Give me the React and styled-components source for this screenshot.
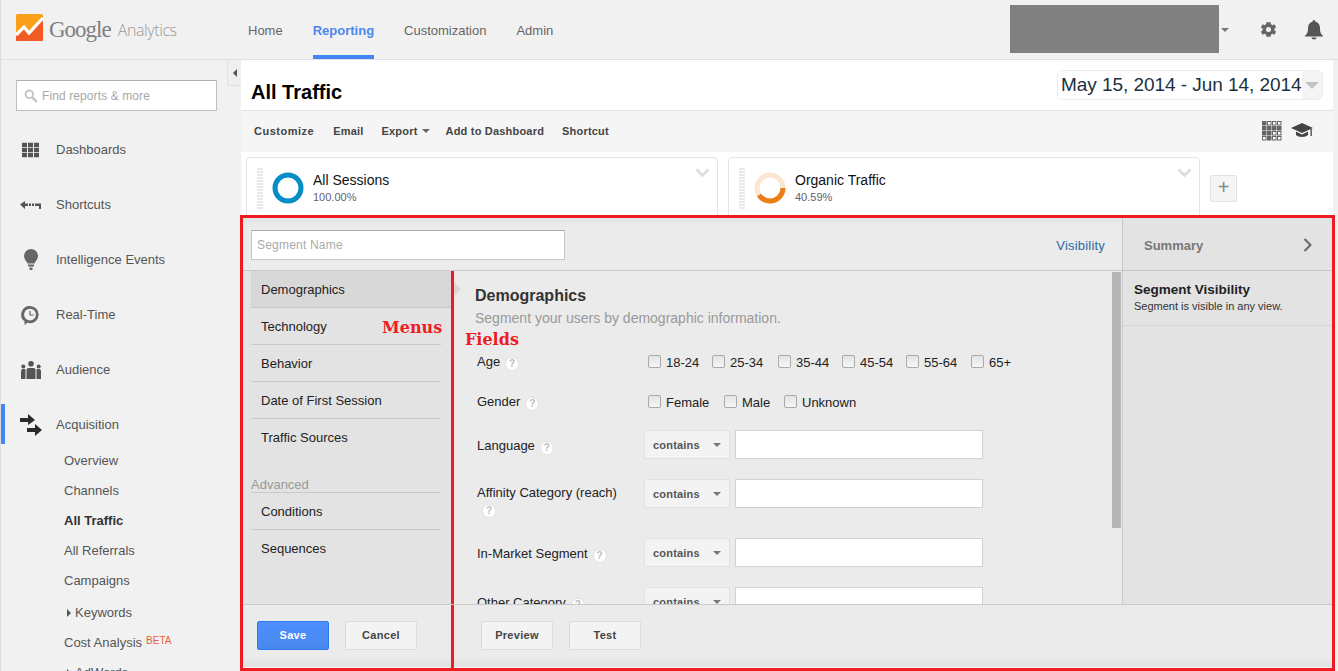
import React from "react";
import styled, { createGlobalStyle } from "styled-components";

const GlobalStyle = createGlobalStyle`
  html, body {
    margin: 0;
    height: 671px;
    overflow: hidden;
    background: #f1f1f1;
    font-family: "Liberation Sans", Arial, sans-serif;
  }
  * { box-sizing: border-box; }
`;

const Page = styled.div`
  width: 1338px;
  height: 671px;
  overflow: hidden;
  border-left: 1px solid #dcdcdc;
  display: flex;
  flex-direction: column;
`;

/* header */
const Header = styled.header`
  height: 60px;
  flex: none;
  display: flex;
  align-items: center;
  border-bottom: 1px solid #e0e0e0;
  background: #f1f1f1;
  padding-left: 14px;
`;

const Brand = styled.div`
  width: 233px;
  display: flex;
  align-items: center;
`;

const LogoWrap = styled.span`
  display: flex;
  margin-top: -4px;
`;

const BrandGoogle = styled.span`
  font-family: "Liberation Serif", serif;
  font-size: 23px;
  color: #808080;
  margin-left: 6px;
  letter-spacing: -1px;
`;

const BrandAnalytics = styled.span`
  font-family: "Open Sans", sans-serif;
  font-weight: 300;
  font-size: 16px;
  letter-spacing: -0.4px;
  color: #999;
  margin-left: 7px;
  margin-top: 1px;
`;

const TopNav = styled.nav`
  display: flex;
  gap: 30px;
  height: 59px;
`;

const TopLink = styled.a`
  height: 59px;
  line-height: 61px;
  font-size: 13px;
  color: ${(p) => (p.$active ? "#4d86f0" : "#666")};
  font-weight: ${(p) => (p.$active ? 700 : 400)};
  border-bottom: ${(p) => (p.$active ? "4px solid #4285f4" : "none")};
`;

const HeaderRight = styled.div`
  margin-left: auto;
  display: flex;
  align-items: center;
  padding-right: 15px;
`;

const Redacted = styled.div`
  width: 209px;
  height: 48px;
  background: #808080;
  margin-top: -2px;
`;

const Caret = styled.span`
  display: inline-block;
  width: 0;
  height: 0;
  border-left: ${(p) => p.$size || 4}px solid transparent;
  border-right: ${(p) => p.$size || 4}px solid transparent;
  border-top: ${(p) => p.$size || 4}px solid ${(p) => p.$color || "#777"};
`;

const AccountCaret = styled(Caret)`
  margin: 0 30px 0 2px;
`;

const BellWrap = styled.div`
  margin-left: 27px;
  display: flex;
`;

/* body */
const Body = styled.div`
  flex: 1;
  display: flex;
  min-height: 0;
`;

const Sidebar = styled.aside`
  width: 240px;
  flex: none;
  background: #f1f1f1;
  position: relative;
  padding-top: 20px;
`;

const CollapseTab = styled.div`
  position: absolute;
  top: 0;
  right: 0;
  width: 14px;
  height: 26px;
  background: #efefef;
  border: 1px solid #e0e0e0;
  border-top: none;
  border-right: none;
  display: flex;
  align-items: center;
  justify-content: center;
`;

const LeftCaret = styled.span`
  width: 0;
  height: 0;
  border-top: 4px solid transparent;
  border-bottom: 4px solid transparent;
  border-right: 4px solid #555;
`;

const SearchBox = styled.div`
  width: 201px;
  height: 31px;
  margin-left: 15px;
  background: #fff;
  border: 1px solid #c0c0c0;
  border-top-color: #b0b0b0;
  display: flex;
  align-items: center;
  padding-left: 7px;
  gap: 4px;
  font-size: 12px;
  color: #a8a8a8;
  letter-spacing: 0.1px;
`;

const SideList = styled.div`
  margin-top: 11px;
`;

const SideItem = styled.div`
  height: 55px;
  display: flex;
  align-items: center;
  font-size: 13px;
  color: #555;
  position: relative;
  padding-left: 55px;
`;

const SideIcon = styled.span`
  position: absolute;
  left: 19px;
  top: 50%;
  transform: translateY(-50%);
  display: flex;
`;

const ActiveBar = styled.span`
  position: absolute;
  left: 0;
  top: 7px;
  width: 4px;
  height: 40px;
  background: #4285f4;
`;

const SubItem = styled.div`
  height: 30px;
  margin-top: ${(p) => p.$mt || 0}px;
  line-height: 30px;
  padding-left: ${(p) => (p.$nested ? 74 : 63)}px;
  font-size: 13px;
  color: ${(p) => (p.$active ? "#333" : "#555")};
  font-weight: ${(p) => (p.$active ? 700 : 400)};
  position: relative;
`;

const SubArrow = styled.span`
  position: absolute;
  left: 66px;
  top: 11px;
  width: 0;
  height: 0;
  border-top: 4px solid transparent;
  border-bottom: 4px solid transparent;
  border-left: 4px solid #555;
`;

const Beta = styled.span`
  color: #e8613a;
  font-size: 10px;
  margin-left: 4px;
  line-height: 0;
  vertical-align: 3px;
`;

/* content */
const Content = styled.main`
  width: 1092px;
  flex: none;
  background: #fff;
  display: flex;
  flex-direction: column;
`;

const TitleRow = styled.div`
  height: 50px;
  flex: none;
  padding: 10px 10px 0;
  display: flex;
  justify-content: space-between;
  align-items: flex-start;
`;

const PageTitle = styled.h1`
  margin: 10px 0 0;
  font-size: 20px;
  line-height: 24px;
  font-weight: 700;
  color: #000;
`;

const DateRange = styled.div`
  width: 266px;
  height: 30px;
  border: 1px solid #ececec;
  border-radius: 5px;
  display: flex;
  align-items: center;
  font-size: 19px;
  letter-spacing: -0.05px;
  color: #20303f;
  padding-left: 3px;
  overflow: hidden;
  white-space: nowrap;
`;

const DateCaret = styled.span`
  margin-left: auto;
  width: 20px;
  height: 100%;
  background: #f4f4f4;
  display: flex;
  align-items: center;
  justify-content: center;
`;

const Toolbar = styled.div`
  height: 42px;
  flex: none;
  background: #f5f5f5;
  border-top: 1px solid #e5e5e5;
  display: flex;
  align-items: center;
  padding: 0 20px 1px 13px;
  gap: 18px;
`;

const ToolLink = styled.span`
  font-size: 11px;
  font-weight: 700;
  color: #444;
  letter-spacing: 0.2px;
  display: flex;
  align-items: center;
  gap: 4px;

  &:first-child {
    letter-spacing: 0.5px;
    margin-right: 1px;
  }

  &:nth-child(3) {
    margin-right: -2px;
  }
`;

const ToolIcons = styled.div`
  margin-left: auto;
  display: flex;
  align-items: center;
  gap: 9px;
`;

const CardRow = styled.div`
  height: 63px;
  flex: none;
  display: flex;
  padding: 5px 0 0 5px;
  gap: 10px;
  overflow: hidden;
`;

const SegmentCard = styled.div`
  width: 472px;
  height: 80px;
  border: 1px solid #e4e4e4;
  border-radius: 4px;
  display: flex;
  padding: 10px 7px 0 10px;
  position: relative;
`;

const DragHandle = styled.div`
  width: 6px;
  height: 42px;
  background: repeating-linear-gradient(#e8e8e8 0 2px, #fff 2px 3px);
`;

const CardText = styled.div`
  position: absolute;
  left: 66px;
  top: 14px;
`;

const CardName = styled.div`
  font-size: 14px;
  line-height: 17px;
  color: #111;
`;

const CardPct = styled.div`
  font-size: 11px;
  line-height: 13px;
  margin-top: 2px;
  color: #66606e;
`;

const DonutWrap = styled.span`
  position: absolute;
  left: 25px;
  top: 14px;
  display: flex;
`;

const CardChevron = styled.span`
  position: absolute;
  right: 7px;
  top: 10px;
  display: flex;
`;

const AddButton = styled.div`
  width: 27px;
  height: 27px;
  margin-top: 18px;
  background: #f5f5f5;
  border: 1px solid #e2e2e2;
  border-radius: 2px;
  color: #7b8a8f;
  font-size: 20px;
  line-height: 23px;
  text-align: center;
`;

/* segment panel */
const Panel = styled.section`
  flex: 1;
  min-height: 0;
  width: 1095px;
  margin-left: -1px;
  border: 3px solid #ed1c24;
  background: #ebebeb;
  display: flex;
  flex-direction: column;
  position: relative;
  overflow: hidden;
`;

const Upper = styled.div`
  flex: 1;
  min-height: 0;
  display: flex;
`;

const Editor = styled.div`
  width: 879px;
  flex: none;
  display: flex;
  flex-direction: column;
  background: linear-gradient(#e4e4e4, #ebebeb 8px);
`;

const TopBar = styled.div`
  height: 53px;
  flex: none;
  border-bottom: 1px solid #c9c9c9;
  display: flex;
  align-items: center;
  justify-content: space-between;
  padding: 2px 17px 0 8px;
`;

const NameInput = styled.div`
  width: 314px;
  height: 30px;
  background: #fff;
  border: 1px solid #c6c6c6;
  border-top-color: #a8a8a8;
  font-size: 12px;
  line-height: 28px;
  color: #aaa;
  padding-left: 5px;
  letter-spacing: 0.2px;
`;

const VisLink = styled.a`
  font-size: 13px;
  letter-spacing: 0.2px;
  color: #2a6aa6;
`;

const EditorMain = styled.div`
  flex: 1;
  display: flex;
  min-height: 0;
`;

const MenuCol = styled.div`
  width: 211px;
  flex: none;
  border-right: 3px solid #ed1c24;
  background: #e3e3e3;
  padding-left: 8px;
  position: relative;
`;

const MenuItem = styled.div`
  height: 37px;
  padding-left: 10px;
  margin-right: ${(p) => (p.$active ? 0 : 10)}px;
  font-size: 13px;
  line-height: 37px;
  color: #222;
  background: ${(p) => (p.$active ? "#d8d8d8" : "transparent")};
  border-bottom: ${(p) => (p.$last ? "none" : "1px solid #c9c9c9")};
`;

const AdvancedLabel = styled.div`
  margin: 10px 10px 0 0;
  padding-top: 9px;
  height: 27px;
  line-height: 19px;
  font-size: 13px;
  color: #999;
  border-bottom: 1px solid #c9c9c9;
`;

const FootBar = styled.div`
  height: 64px;
  flex: none;
  display: flex;
  background: linear-gradient(#ebebeb 82%, #e1e1e1 99%, #f4f4f4 99%);
  border-top: 1px solid #c9c9c9;
`;

const FootCell = styled.div`
  display: flex;
  gap: 16px;
  padding: 16px 0 0 ${(p) => p.$pad}px;
  width: ${(p) => p.$w || "auto"};
  border-right: ${(p) => (p.$divider ? "3px solid #ed1c24" : "none")};
`;

const Btn = styled.div`
  width: 72px;
  height: 29px;
  border: 1px solid ${(p) => (p.$primary ? "#3079ed" : "#dcdcdc")};
  border-radius: 2px;
  background: ${(p) => (p.$primary ? "linear-gradient(#4d90fe, #4787ed)" : "#f3f3f3")};
  color: ${(p) => (p.$primary ? "#fff" : "#444")};
  font-size: 11px;
  font-weight: 700;
  letter-spacing: 0.3px;
  line-height: 27px;
  text-align: center;
`;

const MenuTag = styled.span`
  position: absolute;
  left: 139px;
  top: 47px;
  font-family: "DejaVu Serif", serif;
  font-weight: 700;
  font-size: 16px;
  color: #ed1c24;
`;

const FieldsTag = styled.span`
  position: absolute;
  left: 11px;
  top: 59px;
  font-family: "DejaVu Serif", serif;
  font-weight: 700;
  font-size: 16px;
  color: #ed1c24;
`;

const ActivePointer = styled.span`
  position: absolute;
  left: 0;
  top: 11px;
  width: 0;
  height: 0;
  border-top: 7px solid transparent;
  border-bottom: 7px solid transparent;
  border-left: 7px solid #d8d8d8;
`;

const FieldsScroll = styled.div`
  flex: 1;
  min-width: 0;
  overflow: hidden;
  padding: 15px 0 0 21px;
  position: relative;
`;

const ScrollThumb = styled.div`
  position: absolute;
  top: 1px;
  right: 1px;
  width: 9px;
  height: 256px;
  background: #b5b5b5;
`;

const FieldsTitle = styled.h2`
  margin: 0;
  font-size: 16px;
  line-height: 20px;
  font-weight: 700;
  color: #333;
`;

const FieldsSub = styled.p`
  margin: 4px 0 0;
  font-size: 14px;
  line-height: 17px;
  color: #999;
`;

const FieldRow = styled.div`
  display: flex;
  margin-top: ${(p) => p.$mt}px;
  margin-left: 2px;
  height: ${(p) => p.$h}px;
`;

const FieldLabel = styled.div`
  width: 167px;
  flex: none;
  padding-top: ${(p) => p.$pt || 0}px;
  font-size: 13px;
  line-height: 18px;
  color: #222;
`;

const Help = styled.span`
  display: inline-flex;
  align-items: center;
  justify-content: center;
  width: 14px;
  height: 14px;
  margin-left: 5px;
  border-radius: 50%;
  background: #fff;
  border: 1px solid #e2e2e2;
  color: #bbb;
  font-size: 10px;
  font-weight: 700;
  vertical-align: -1px;
  position: relative;
  top: ${(p) => p.$lift || 0}px;
`;

const Checks = styled.div`
  display: flex;
  padding: 1px 0 0 4px;
`;

const CheckItem = styled.label`
  display: flex;
  width: ${(p) => p.$w}px;
  font-size: 13px;
  line-height: 18px;
  color: #222;
`;

const CheckBox = styled.span`
  width: 13px;
  height: 13px;
  flex: none;
  margin: 1px 5px 0 0;
  border: 1px solid #a9a9a9;
  border-radius: 2px;
  background: linear-gradient(#e4e4e4, #f6f6f6);
`;

const SelectBox = styled.div`
  width: 86px;
  height: 29px;
  background: #f3f3f3;
  border: 1px solid #e2e2e2;
  border-radius: 2px;
  display: flex;
  align-items: center;
  justify-content: space-between;
  padding: 0 8px;
  font-size: 11px;
  font-weight: 700;
  letter-spacing: 0.2px;
  color: #555;
`;

const TextBox = styled.div`
  width: 248px;
  height: 29px;
  margin-left: 5px;
  background: #fff;
  border: 1px solid #d2d2d2;
`;

/* summary */
const Summary = styled.aside`
  flex: 1;
  min-width: 0;
  background: #e3e3e3;
  border-left: 1px solid #c9c9c9;
  display: flex;
  flex-direction: column;
`;

const SummaryHead = styled.div`
  height: 53px;
  flex: none;
  border-bottom: 1px solid #c9c9c9;
  display: flex;
  align-items: center;
  justify-content: space-between;
  padding: 2px 19px 0 21px;
  font-size: 13px;
  font-weight: 700;
  color: #777;
`;

const SummaryBlock = styled.div`
  height: 55px;
  border-bottom: 1px solid #d5d5d5;
  padding: 10px 11px 0;
`;

const BlockTitle = styled.div`
  font-size: 13.5px;
  line-height: 17px;
  font-weight: 700;
  color: #222;
`;

const BlockText = styled.div`
  font-size: 11px;
  line-height: 13px;
  margin-top: 2px;
  color: #333;
`;

const Logo = () => (
  <svg width="28" height="27" viewBox="0 0 28 27">
    <rect x="1" y="0" width="27" height="27" rx="1.5" fill="#f9a11b" />
    <path d="M1 21 9 13l5 6L28 4v22a1 1 0 0 1-1 1H2a1 1 0 0 1-1-1z" fill="#f15a24" />
    <path d="M1 21 9 13l5 6L28 4" fill="none" stroke="#fff" strokeWidth="3.2" />
  </svg>
);

const Gear = () => (
  <svg width="19" height="19" viewBox="0 0 24 24" fill="#666">
    <path d="M19.4 13a7.6 7.6 0 0 0 0-2l2.2-1.7-2.2-3.8-2.6 1a7.6 7.6 0 0 0-1.8-1L14.6 2.7h-5.2L9 5.5a7.6 7.6 0 0 0-1.8 1l-2.6-1-2.2 3.8L4.6 11a7.6 7.6 0 0 0 0 2l-2.2 1.7 2.2 3.8 2.6-1a7.6 7.6 0 0 0 1.8 1l.4 2.8h5.2l.4-2.8a7.6 7.6 0 0 0 1.8-1l2.6 1 2.2-3.8zM12 15.2a3.2 3.2 0 1 1 0-6.4 3.2 3.2 0 0 1 0 6.4z" />
  </svg>
);

const Bell = () => (
  <svg width="18" height="20" viewBox="0 0 18 20" fill="#555">
    <path d="M9 0a1.6 1.6 0 0 1 1.5 1.7C13.4 2.4 15 4.8 15 8c0 4 .6 5.6 3 7.8v.7H0v-.7C2.4 13.6 3 12 3 8c0-3.2 1.6-5.6 4.5-6.3A1.6 1.6 0 0 1 9 0z" />
    <path d="M6.5 17.5h5a2.5 2 0 0 1-5 0z" />
  </svg>
);

const Search = () => (
  <svg width="14" height="14" viewBox="0 0 14 14" fill="none">
    <circle cx="5.3" cy="5.3" r="3.8" stroke="#c4c4c4" strokeWidth="1.8" />
    <path d="m8.3 8.3 4.5 4.5" stroke="#c4c4c4" strokeWidth="2.4" />
  </svg>
);

const DashIcon = () => (
  <svg width="24" height="15" viewBox="0 0 24 15" fill="#555">
    {[2, 8, 14].flatMap((x) =>
      [0, 5.25, 10.5].map((y) => <rect key={`${x}-${y}`} x={x} y={y} width="5" height="4.5" />)
    )}
  </svg>
);

const ShortcutIcon = () => (
  <svg width="22" height="10" viewBox="0 0 22 10" fill="#555">
    <path d="M0 4.5 5 1v2.5h3V6H5v3z" />
    <rect x="9" y="3.5" width="2" height="2.5" />
    <rect x="12" y="3.5" width="2" height="2.5" />
    <path d="M15 3.500h6V9h-2V6h-4z" />
  </svg>
);

const BulbIcon = () => (
  <svg width="22" height="22" viewBox="0 0 22 22" fill="#666">
    <path d="M11 0a7 7 0 0 1 7 7c0 3-2 4.5-3.5 7.5h-7C6 11.5 4 10 4 7a7 7 0 0 1 7-7z" />
    <rect x="8" y="15.5" width="6" height="2" />
    <rect x="9.5" y="18.5" width="3" height="2.5" />
  </svg>
);

const ClockIcon = () => (
  <svg width="20" height="20" viewBox="0 0 22 22">
    <path d="M11 1a9.500 9.500 0 0 1 0 19c-1 0-2-.2-3-.5L5 22v-4A9.500 9.500 0 0 1 11 1z" fill="#666" />
    <circle cx="11" cy="10.5" r="6.5" fill="#f1f1f1" />
    <path d="M11 6.500v4.500h4" fill="none" stroke="#666" strokeWidth="1.3" />
  </svg>
);

const AudienceIcon = () => (
  <svg width="22" height="18" viewBox="0 0 22 18" fill="#555">
    <circle cx="11" cy="2.8" r="2.8" />
    <circle cx="3.3" cy="5.5" r="2" />
    <circle cx="18.7" cy="5.5" r="2" />
    <path d="M6.5 9a2 2 0 0 1 2-2h5a2 2 0 0 1 2 2v9h-9zM1 10a2 2 0 0 1 2-2h2.500v10H1zM16.500 8H19a2 2 0 0 1 2 2v8h-4.500z" />
  </svg>
);

const AcquisitionIcon = () => (
  <svg width="23" height="22" viewBox="0 0 23 22" fill="#2b2b2b">
    <path d="M0 4h8V0l7 6-7 5V8H0z" />
    <path d="M7 14h8v-4l7 6-7 6v-4H7z" />
  </svg>
);

const Donut = ({ color, track, pct }) => {
  const r = 13;
  const c = 2 * Math.PI * r;
  return (
    <svg width="32" height="32" viewBox="0 0 32 32">
      <circle cx="16" cy="16" r={r} fill="none" stroke={track} strokeWidth="5" />
      <circle
        cx="16"
        cy="16"
        r={r}
        fill="none"
        stroke={color}
        strokeWidth="5"
        strokeDasharray={`${(c * pct) / 100} ${c}`}
      />
    </svg>
  );
};

const Chevron = () => (
  <svg width="15" height="10" viewBox="0 0 15 10" fill="none">
    <path d="m1.5 1.5 6 6 6-6" stroke="#dcdcdc" strokeWidth="2.6" />
  </svg>
);

const gridRows = ["1000", "1111", "1100", "0100"];

const GridIcon = () => (
  <svg width="20" height="20" viewBox="0 0 20 20">
    {gridRows.flatMap((row, r) =>
      [...row].map((on, c) => (
        <rect
          key={`${r}-${c}`}
          x={c * 5 + 0.5}
          y={r * 5 + 0.5}
          width="3.5"
          height="3.5"
          fill={on === "1" ? "#666" : "#fff"}
          stroke="#666"
        />
      ))
    )}
  </svg>
);

const CapIcon = () => (
  <svg width="22" height="16" viewBox="0 0 22 16" fill="#444">
    <path d="M11 0 22 5l-11 5L0 5z" />
    <path d="M5 8.5 11 11.5l6-3V12c-2 2.5-10 2.5-12 0z" />
    <rect x="19.5" y="6" width="1.3" height="7" />
  </svg>
);

const SummaryArrow = () => (
  <svg width="10" height="14" viewBox="0 0 10 14" fill="none">
    <path d="m1.5 1 6 6-6 6" stroke="#666" strokeWidth="2" />
  </svg>
);

const sideItems = [
  ["Dashboards", <DashIcon />],
  ["Shortcuts", <ShortcutIcon />],
  ["Intelligence Events", <BulbIcon />],
  ["Real-Time", <ClockIcon />],
  ["Audience", <AudienceIcon />],
];

const ages = [
  ["18-24", 64],
  ["25-34", 66],
  ["35-44", 64],
  ["45-54", 64],
  ["55-64", 65],
  ["65+", 50],
];

const genders = [
  ["Female", 76],
  ["Male", 60],
  ["Unknown", 90],
];

const menus = ["Demographics", "Technology", "Behavior", "Date of First Session", "Traffic Sources"];

const Combo = () => (
  <>
    <SelectBox>
      contains <Caret $color="#777" />
    </SelectBox>
    <TextBox />
  </>
);

export default function App() {
  return (
    <Page>
      <GlobalStyle />
      <Header>
        <Brand>
          <LogoWrap>
            <Logo />
          </LogoWrap>
          <BrandGoogle>Google</BrandGoogle>
          <BrandAnalytics>Analytics</BrandAnalytics>
        </Brand>
        <TopNav>
          <TopLink>Home</TopLink>
          <TopLink $active>Reporting</TopLink>
          <TopLink>Customization</TopLink>
          <TopLink>Admin</TopLink>
        </TopNav>
        <HeaderRight>
          <Redacted />
          <AccountCaret />
          <Gear />
          <BellWrap>
            <Bell />
          </BellWrap>
        </HeaderRight>
      </Header>
      <Body>
        <Sidebar>
          <CollapseTab>
            <LeftCaret />
          </CollapseTab>
          <SearchBox>
            <Search />
            Find reports &amp; more
          </SearchBox>
          <SideList>
            {sideItems.map(([label, icon]) => (
              <SideItem key={label}>
                <SideIcon>{icon}</SideIcon>
                {label}
              </SideItem>
            ))}
            <SideItem>
              <ActiveBar />
              <SideIcon>
                <AcquisitionIcon />
              </SideIcon>
              Acquisition
            </SideItem>
          </SideList>
          <SubItem $mt={-6}>Overview</SubItem>
          <SubItem>Channels</SubItem>
          <SubItem $active>All Traffic</SubItem>
          <SubItem>All Referrals</SubItem>
          <SubItem>Campaigns</SubItem>
          <SubItem $nested $mt={2}>
            <SubArrow />
            Keywords
          </SubItem>
          <SubItem>
            Cost Analysis<Beta>BETA</Beta>
          </SubItem>
          <SubItem $nested>
            <SubArrow />
            AdWords
          </SubItem>
        </Sidebar>
        <Content>
          <TitleRow>
            <PageTitle>All Traffic</PageTitle>
            <DateRange>
              May 15, 2014 - Jun 14, 2014
              <DateCaret>
                <Caret $size={7} $color="#c4c4c4" />
              </DateCaret>
            </DateRange>
          </TitleRow>
          <Toolbar>
            <ToolLink>Customize</ToolLink>
            <ToolLink>Email</ToolLink>
            <ToolLink>
              Export <Caret $color="#666" />
            </ToolLink>
            <ToolLink>Add to Dashboard</ToolLink>
            <ToolLink>Shortcut</ToolLink>
            <ToolIcons>
              <GridIcon />
              <CapIcon />
            </ToolIcons>
          </Toolbar>
          <CardRow>
            <SegmentCard>
              <DragHandle />
              <DonutWrap>
                <Donut color="#058dc7" track="#fff" pct={99.3} />
              </DonutWrap>
              <CardText>
                <CardName>All Sessions</CardName>
                <CardPct>100.00%</CardPct>
              </CardText>
              <CardChevron>
                <Chevron />
              </CardChevron>
            </SegmentCard>
            <SegmentCard>
              <DragHandle />
              <DonutWrap>
                <Donut color="#ed7e17" track="#fbe6d2" pct={40.59} />
              </DonutWrap>
              <CardText>
                <CardName>Organic Traffic</CardName>
                <CardPct>40.59%</CardPct>
              </CardText>
              <CardChevron>
                <Chevron />
              </CardChevron>
            </SegmentCard>
            <AddButton>+</AddButton>
          </CardRow>
          <Panel>
            <Upper>
              <Editor>
                <TopBar>
                  <NameInput>Segment Name</NameInput>
                  <VisLink>Visibility</VisLink>
                </TopBar>
                <EditorMain>
                  <MenuCol>
                    {menus.map((m, i) => (
                      <MenuItem key={m} $active={i === 0} $last={i === menus.length - 1}>
                        {m}
                      </MenuItem>
                    ))}
                    <AdvancedLabel>Advanced</AdvancedLabel>
                    <MenuItem>Conditions</MenuItem>
                    <MenuItem $last>Sequences</MenuItem>
                    <MenuTag>Menus</MenuTag>
                  </MenuCol>
                  <FieldsScroll>
                    <ActivePointer />
                    <FieldsTag>Fields</FieldsTag>
                    <ScrollThumb />
                    <FieldsTitle>Demographics</FieldsTitle>
                    <FieldsSub>Segment your users by demographic information.</FieldsSub>
                    <FieldRow $mt={26} $h={20}>
                      <FieldLabel>
                        Age<Help>?</Help>
                      </FieldLabel>
                      <Checks>
                        {ages.map(([a, w]) => (
                          <CheckItem key={a} $w={w}>
                            <CheckBox />
                            {a}
                          </CheckItem>
                        ))}
                      </Checks>
                    </FieldRow>
                    <FieldRow $mt={20} $h={20}>
                      <FieldLabel>
                        Gender<Help>?</Help>
                      </FieldLabel>
                      <Checks>
                        {genders.map(([a, w]) => (
                          <CheckItem key={a} $w={w}>
                            <CheckBox />
                            {a}
                          </CheckItem>
                        ))}
                      </Checks>
                    </FieldRow>
                    <FieldRow $mt={17} $h={29}>
                      <FieldLabel $pt={7}>
                        Language<Help>?</Help>
                      </FieldLabel>
                      <Combo />
                    </FieldRow>
                    <FieldRow $mt={20} $h={39}>
                      <FieldLabel $pt={5}>
                        Affinity Category (reach)
                        <br />
                        <Help $lift={-2}>?</Help>
                      </FieldLabel>
                      <Combo />
                    </FieldRow>
                    <FieldRow $mt={20} $h={29}>
                      <FieldLabel $pt={7}>
                        In-Market Segment<Help>?</Help>
                      </FieldLabel>
                      <Combo />
                    </FieldRow>
                    <FieldRow $mt={20} $h={29}>
                      <FieldLabel $pt={7}>
                        Other Category<Help>?</Help>
                      </FieldLabel>
                      <Combo />
                    </FieldRow>
                  </FieldsScroll>
                </EditorMain>
              </Editor>
              <Summary>
                <SummaryHead>
                  Summary
                  <SummaryArrow />
                </SummaryHead>
                <SummaryBlock>
                  <BlockTitle>Segment Visibility</BlockTitle>
                  <BlockText>Segment is visible in any view.</BlockText>
                </SummaryBlock>
              </Summary>
            </Upper>
            <FootBar>
              <FootCell $pad={14} $w="211px" $divider>
                <Btn $primary>Save</Btn>
                <Btn>Cancel</Btn>
              </FootCell>
              <FootCell $pad={27}>
                <Btn>Preview</Btn>
                <Btn>Test</Btn>
              </FootCell>
            </FootBar>
          </Panel>
        </Content>
      </Body>
    </Page>
  );
}
